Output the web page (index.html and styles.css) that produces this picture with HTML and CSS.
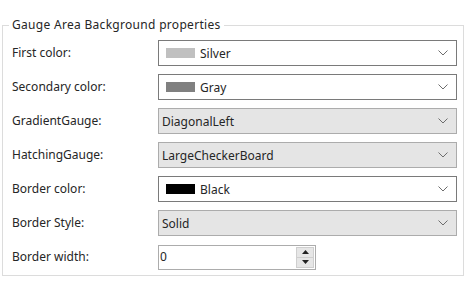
FILE: index.html
```html
<!DOCTYPE html>
<html lang="en">
<head>
    <meta charset="UTF-8">
    <title>Gauge Area Background properties</title>
    <link rel="stylesheet" href="styles.css">
</head>
<body>
    <fieldset class="group">
        <legend>Gauge Area Background properties</legend>

        <div class="rows">
            <label class="caption">First color:</label>
            <div class="combo color-combo">
                <span class="swatch silver"></span>
                <span class="value">Silver</span>
                <svg class="chevron" width="10" height="6" viewBox="0 0 10 6"><polyline points="0.5,0.5 5,5 9.5,0.5" fill="none" stroke="#6d6d6d" stroke-width="1"/></svg>
            </div>

            <label class="caption">Secondary color:</label>
            <div class="combo color-combo">
                <span class="swatch gray"></span>
                <span class="value">Gray</span>
                <svg class="chevron" width="10" height="6" viewBox="0 0 10 6"><polyline points="0.5,0.5 5,5 9.5,0.5" fill="none" stroke="#6d6d6d" stroke-width="1"/></svg>
            </div>

            <label class="caption">GradientGauge:</label>
            <div class="combo list-combo">
                <span class="value">DiagonalLeft</span>
                <svg class="chevron" width="10" height="6" viewBox="0 0 10 6"><polyline points="0.5,0.5 5,5 9.5,0.5" fill="none" stroke="#6d6d6d" stroke-width="1"/></svg>
            </div>

            <label class="caption">HatchingGauge:</label>
            <div class="combo list-combo">
                <span class="value">LargeCheckerBoard</span>
                <svg class="chevron" width="10" height="6" viewBox="0 0 10 6"><polyline points="0.5,0.5 5,5 9.5,0.5" fill="none" stroke="#6d6d6d" stroke-width="1"/></svg>
            </div>

            <label class="caption">Border color:</label>
            <div class="combo color-combo">
                <span class="swatch black"></span>
                <span class="value">Black</span>
                <svg class="chevron" width="10" height="6" viewBox="0 0 10 6"><polyline points="0.5,0.5 5,5 9.5,0.5" fill="none" stroke="#6d6d6d" stroke-width="1"/></svg>
            </div>

            <label class="caption">Border Style:</label>
            <div class="combo list-combo">
                <span class="value">Solid</span>
                <svg class="chevron" width="10" height="6" viewBox="0 0 10 6"><polyline points="0.5,0.5 5,5 9.5,0.5" fill="none" stroke="#6d6d6d" stroke-width="1"/></svg>
            </div>

            <label class="caption">Border width:</label>
            <div class="spin">
                <span class="spin-value">0</span>
                <div class="spin-buttons">
                    <span class="spin-btn"><svg width="7" height="4" viewBox="0 0 7 4"><polygon points="3.5,0 7,4 0,4" fill="#222"/></svg></span>
                    <span class="spin-btn"><svg width="7" height="4" viewBox="0 0 7 4"><polygon points="0,0 7,0 3.5,4" fill="#222"/></svg></span>
                </div>
            </div>
        </div>
    </fieldset>
</body>
</html>
```

FILE: styles.css
```css
body {
    margin: 0;
    padding: 17px 0 0 2px;
    font-family: 'Noto Sans', 'Open Sans', sans-serif;
    font-size: 12px;
    color: #262626;
    background-color: #ffffff;
}

.group {
    box-sizing: border-box;
    width: 462px;
    height: 259px;
    margin: 0;
    padding: 7px 6px 0 9px;
    border: 1px solid #dcdcdc;
    min-width: 0;
}

.group legend {
    padding: 0 3px;
    margin-left: -3px;
    line-height: 16px;
    letter-spacing: 0.3px;
}

.rows {
    display: grid;
    grid-template-columns: 146px 1fr;
    grid-auto-rows: 26px;
    row-gap: 8px;
    align-items: center;
}

.caption {
    line-height: 16px;
}

.combo {
    box-sizing: border-box;
    height: 26px;
    display: flex;
    align-items: center;
    padding: 0 4px 0 7px;
}

.color-combo {
    background-color: #ffffff;
    border: 1px solid #7a7a7a;
}

.list-combo {
    background-color: #e5e5e5;
    border: 1px solid #acacac;
    padding-left: 3px;
}

.swatch {
    width: 29px;
    height: 10px;
    margin-right: 5px;
}

.swatch.silver {
    background-color: #c0c0c0;
}

.swatch.gray {
    background-color: #808080;
}

.swatch.black {
    background-color: #000000;
}

.chevron {
    margin-left: auto;
    margin-right: 4px;
}

.spin {
    box-sizing: border-box;
    width: 158px;
    height: 25px;
    display: flex;
    align-items: stretch;
    border: 1px solid #acacac;
    background-color: #ffffff;
}

.spin-value {
    flex: 1;
    padding-left: 1px;
    line-height: 22px;
}

.spin-buttons {
    width: 18px;
    display: flex;
    flex-direction: column;
    margin: 1px;
}

.spin-btn {
    flex: 1;
    display: flex;
    align-items: center;
    justify-content: center;
    background-color: #e6e6e6;
    border: 1px solid #cfcfcf;
}

.spin-btn + .spin-btn {
    border-top: none;
}
```
